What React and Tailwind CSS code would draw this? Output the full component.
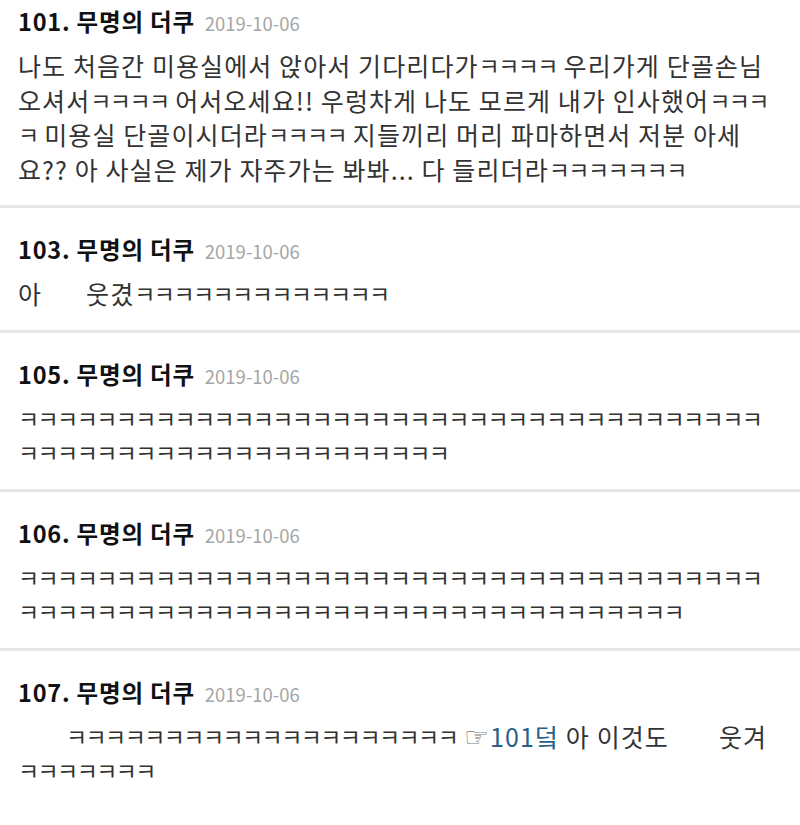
import React from 'react';

const FONT = { fontFamily: '"Noto Sans CJK KR", "Noto Sans", sans-serif' };

// run of ㅋ, set a little smaller and tighter than the surrounding syllables
function K({ n }) {
  return (
    <span className="text-[23px] tracking-[-1.6px] leading-none align-[1px]">{'ㅋ'.repeat(n)}</span>
  );
}

// one block of the comment thread
function Comment({ no, date, first, last, children }) {
  return (
    <div
      className={`px-[18px] ${first ? 'pt-[7px]' : 'pt-[27px]'} ${
        last ? 'pb-[40px]' : 'pb-[19px] border-b-[3px] border-[#e6e6e6]'
      }`}
    >
      <div className="flex items-baseline gap-[10px] leading-[28px]">
        <span className="text-[23.5px] font-bold text-[#111] tracking-[0.8px]">
          {no}. 무명의 더쿠
        </span>
        <span className="text-[18.5px] text-[#a6a6a6]">{date}</span>
      </div>
      <div className="mt-[11px] text-[25px] tracking-[1.1px] leading-[34.5px] text-[#333] whitespace-pre">
        {children}
      </div>
    </div>
  );
}

export default function App() {
  return (
    <div className="w-[800px] h-[825px] bg-white overflow-hidden" style={FONT}>
      <Comment no={101} date="2019-10-06" first>
        <div>나도 처음간 미용실에서 앉아서 기다리다가<K n={4} /> 우리가게 단골손님</div>
        <div>오셔서<K n={4} /> 어서오세요!! 우렁차게 나도 모르게 내가 인사했어<K n={3} /></div>
        <div><K n={1} /> 미용실 단골이시더라<K n={4} /> 지들끼리 머리 파마하면서 저분 아세</div>
        <div>요?? 아 사실은 제가 자주가는 봐봐... 다 들리더라<K n={7} /></div>
      </Comment>

      <Comment no={103} date="2019-10-06">
        <div>
          아<span className="ml-[44px]">웃겼</span><K n={13} />
        </div>
      </Comment>

      <Comment no={105} date="2019-10-06">
        <div><K n={38} /></div>
        <div><K n={22} /></div>
      </Comment>

      <Comment no={106} date="2019-10-06">
        <div><K n={38} /></div>
        <div><K n={34} /></div>
      </Comment>

      <Comment no={107} date="2019-10-06" last>
        <div className="pl-[48px]">
          <K n={20} />{' '}
          <span
            className="text-[#7a7a7a] text-[28px] leading-none"
            style={{ fontFamily: '"DejaVu Sans", sans-serif' }}
          >
            ☞
          </span>
          <span className="text-[#2b5f86]">101덬</span> 아 이것도
          <span className="ml-[50px]">웃겨</span>
        </div>
        <div><K n={7} /></div>
      </Comment>
    </div>
  );
}
